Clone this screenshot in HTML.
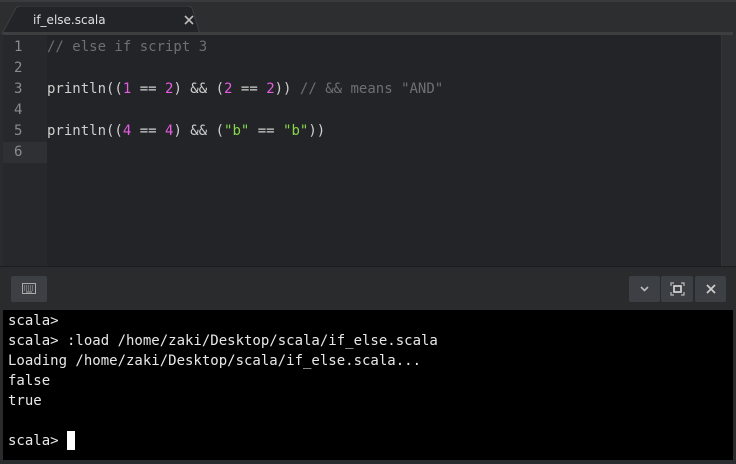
<!DOCTYPE html>
<html><head><meta charset="utf-8"><style>
*{margin:0;padding:0;box-sizing:border-box}
body{width:736px;height:464px;background:#2a2b2d;position:relative;overflow:hidden;font-family:"DejaVu Sans Mono","Liberation Mono",monospace}
#tabbar{position:absolute;left:0;top:0;width:736px;height:35px;background:#2d2e30;border-top:2px solid #3a3b3d}
#tabline{position:absolute;left:3px;top:32px;width:730px;height:3px;background:#3d3e40}
#tab{position:absolute;left:12px;top:6px;width:200px;height:28px}
#editor{position:absolute;left:3px;top:35px;width:719px;height:231px;background:#232427}
#gutter{position:absolute;left:0;top:0;width:44px;height:231px;background:#27282b}
.ln{position:absolute;left:0;width:44px;height:21px;font:14px "DejaVu Sans Mono",monospace;color:#8a8b8d;padding-left:11px;line-height:21px}
.code{position:absolute;left:44px;height:21px;font:14px "DejaVu Sans Mono",monospace;color:#cfcfcf;line-height:21px;white-space:pre}
.c{color:#6e6f71}.n{color:#e55de3}.s{color:#86d64e}
#vline{position:absolute;left:718px;top:0;width:1px;height:231px;background:#333437}
#sb{position:absolute;left:722px;top:35px;width:14px;height:231px;background:#2e2f31}
#panel{position:absolute;left:0;top:266px;width:736px;height:43px;background:#2a2b2d;border-top:1px solid #1c1d1f}
.btn{position:absolute;top:9px;height:26px;background:#3c3f43;border-radius:2px}
#term{position:absolute;left:3px;top:310px;width:730px;height:150px;background:#000;color:#e8e8e8;font:14px "DejaVu Sans Mono",monospace}
.t{position:absolute;left:5px;height:20px;line-height:20px;white-space:pre}
</style></head><body>
<div id="tabbar">
<svg id="tab" width="200" height="28" viewBox="0 0 200 28" style="position:absolute;left:0;top:4px"><path d="M2 28 L16 2 Q18 0 22 0 L186 0 Q190 0 192 2 L200 28 Z" fill="#232427" stroke="#3d3e40"/></svg>
<div style="position:absolute;left:33px;top:11px;font:12px 'DejaVu Sans','Liberation Sans',sans-serif;color:#e0e0e0">if_else.scala</div>
<svg style="position:absolute;left:184px;top:13px" width="10" height="10" viewBox="0 0 10 10"><path d="M1 1L9 9M9 1L1 9" stroke="#bbb" stroke-width="1.6"/></svg>
</div>
<div id="tabline"></div>
<div id="editor">
<div id="gutter"></div>
<div style="position:absolute;left:0;top:107px;width:44px;height:21px;background:#2f3033"></div>
<div class="ln" style="top:2px">1</div><div class="ln" style="top:23px">2</div><div class="ln" style="top:44px">3</div><div class="ln" style="top:65px">4</div><div class="ln" style="top:86px">5</div><div class="ln" style="top:107px">6</div>
<div class="code c" style="top:2px">// else if script 3</div>
<div class="code" style="top:44px">println((<span class="n">1</span> == <span class="n">2</span>) &amp;&amp; (<span class="n">2</span> == <span class="n">2</span>)) <span class="c">// &amp;&amp; means "AND"</span></div>
<div class="code" style="top:86px">println((<span class="n">4</span> == <span class="n">4</span>) &amp;&amp; (<span class="s">"b"</span> == <span class="s">"b"</span>))</div>
<div id="vline"></div>
</div>
<div id="sb"></div>
<div id="panel">
<div class="btn" style="left:11px;width:36px"><svg style="position:absolute;left:11px;top:7px" width="14" height="11" viewBox="0 0 14 11"><rect x="0.5" y="0.5" width="13" height="10" fill="none" stroke="#aaa"/><path d="M2 3h10M2 5h10M2 7h10" stroke="#aaa" stroke-dasharray="1 1"/><path d="M4 9h6" stroke="#aaa"/></svg></div>
<div class="btn" style="left:629px;width:31px"><svg style="position:absolute;left:11px;top:10px" width="9" height="6" viewBox="0 0 9 6"><path d="M1 1L4.5 4.5L8 1" fill="none" stroke="#bbb" stroke-width="1.6"/></svg></div>
<div class="btn" style="left:661px;width:32px"><svg style="position:absolute;left:9px;top:6px" width="15" height="14" viewBox="0 0 15 14"><path d="M1 4V1H4M11 1H14V4M14 10V13H11M4 13H1V10" fill="none" stroke="#bbb" stroke-width="1.2"/><rect x="4" y="4" width="7" height="6" fill="none" stroke="#ccc" stroke-width="1.8"/></svg></div>
<div class="btn" style="left:695px;width:31px"><svg style="position:absolute;left:11px;top:8px" width="10" height="10" viewBox="0 0 10 10"><path d="M1 1L9 9M9 1L1 9" stroke="#ccc" stroke-width="1.8"/></svg></div>
</div>
<div id="term">
<div class="t" style="top:1px">scala&gt;</div>
<div class="t" style="top:21px">scala&gt; :load /home/zaki/Desktop/scala/if_else.scala</div>
<div class="t" style="top:41px">Loading /home/zaki/Desktop/scala/if_else.scala...</div>
<div class="t" style="top:61px">false</div>
<div class="t" style="top:81px">true</div>
<div class="t" style="top:121px">scala&gt; </div>
<div style="position:absolute;left:64px;top:121px;width:8px;height:19px;background:#fff"></div>
</div>
</body></html>
